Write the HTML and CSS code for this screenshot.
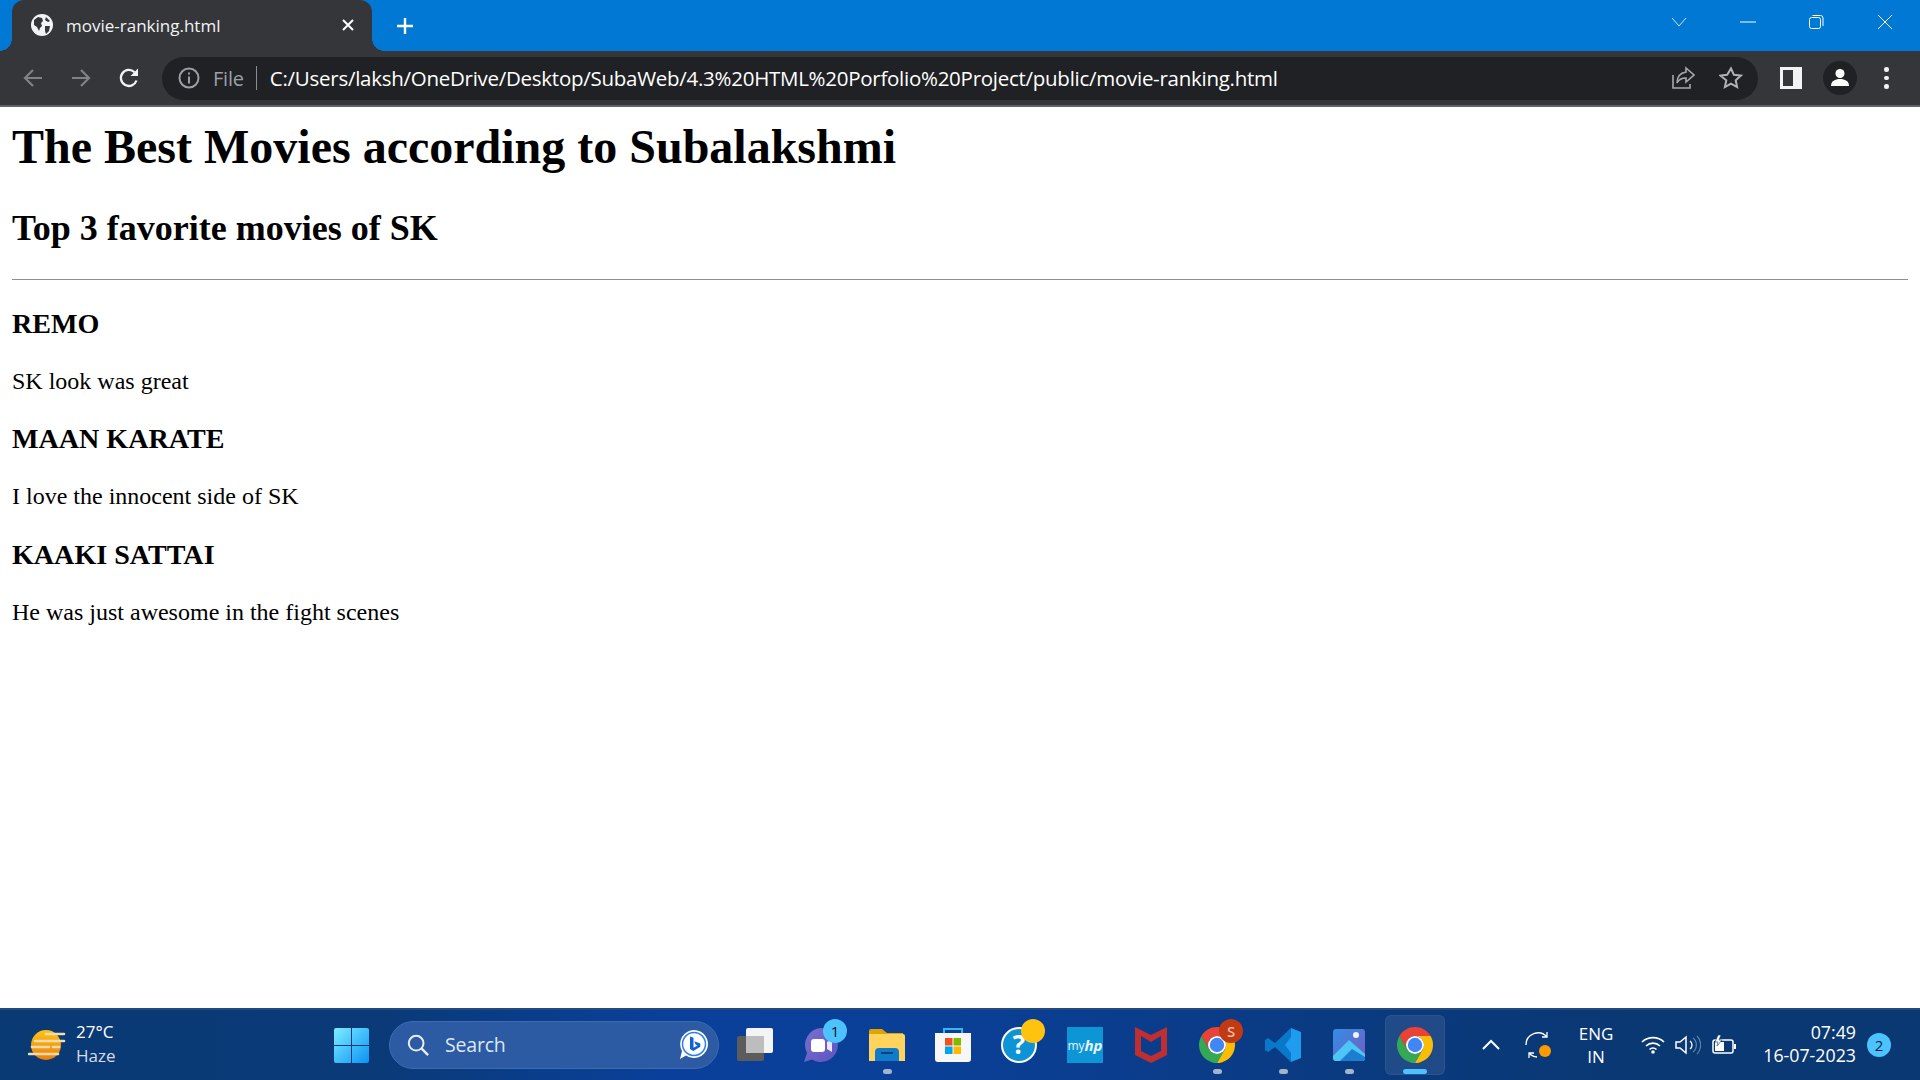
FILE: index.html
```html
<!DOCTYPE html>
<html lang="en">
<head>
<meta charset="utf-8">
<title>movie-ranking.html</title>
<link rel="stylesheet" href="styles.css">
</head>
<body>
<svg class="defs" width="0" height="0" aria-hidden="true">
  <symbol id="chrome" viewBox="4 4 40 40">
    <path fill="#ea4335" d="M24 14H41.32A20 20 0 0 0 6.68 14L15.34 29A10 10 0 0 1 24 14Z"/>
    <path fill="#34a853" d="M15.34 29L6.68 14A20 20 0 0 0 24 44L32.66 29A10 10 0 0 1 15.34 29Z"/>
    <path fill="#fbbc04" d="M32.66 29L24 44A20 20 0 0 0 41.32 14H24A10 10 0 0 1 32.66 29Z"/>
    <circle cx="24" cy="24" r="10" fill="#fff"/>
    <circle cx="24" cy="24" r="8" fill="#4285f4"/>
  </symbol>
</svg>

<header class="chrome">
  <div class="tabstrip">
    <div class="tab">
      <svg class="favicon" viewBox="0 0 22 22"><circle cx="11" cy="11" r="11" fill="#f1f3f4"/><path fill="#35363a" d="M3 6l4-3 4 1 1 3-2 2 1 3-2 2-1 3-2-4-3-2zM15 3l4 4-2 1-3-2zM14 12l5 0-1 5-3 3-1-3z"/></svg>
      <span class="tab-title">movie-ranking.html</span>
      <svg class="tab-close" viewBox="0 0 14 14"><path d="M2 2l10 10M12 2L2 12" stroke="#fff" stroke-width="2" fill="none"/></svg>
    </div>
    <svg class="newtab" viewBox="0 0 18 18"><path d="M9 1v16M1 9h16" stroke="#fff" stroke-width="2.4" fill="none"/></svg>
    <div class="wincontrols">
      <svg class="winbtn" viewBox="0 0 16 16"><path d="M1 4l7 8 7-8" stroke="#cfe4f7" fill="none"/></svg>
      <svg class="winbtn" viewBox="0 0 16 16"><path d="M0 8h16" stroke="#fff" fill="none"/></svg>
      <svg class="winbtn" viewBox="0 0 16 16"><rect x="1.500" y="3.500" width="11" height="11" rx="2" stroke="#fff" fill="none"/><path d="M4.500 1.500h8a2.500 2.500 0 0 1 2.500 2.500v8" stroke="#fff" fill="none"/></svg>
      <svg class="winbtn" viewBox="0 0 16 16"><path d="M1 1l14 14M15 1L1 15" stroke="#fff" fill="none"/></svg>
    </div>
  </div>
  <div class="toolbar">
    <svg class="tool" viewBox="0 0 24 24"><path d="M21 12H4M12 4l-8 8 8 8" stroke="#7f8286" stroke-width="2.200" fill="none"/></svg>
    <svg class="tool tool-fwd" viewBox="0 0 24 24"><path d="M3 12h17M12 4l8 8-8 8" stroke="#7f8286" stroke-width="2.200" fill="none"/></svg>
    <svg class="tool tool-reload" viewBox="0 0 24 24"><path d="M19.500 14.500A8 8 0 1 1 17.500 6.200" stroke="#f1f3f4" stroke-width="2.300" fill="none"/><path d="M21 2.500V10h-7.500z" fill="#f1f3f4"/></svg>
    <div class="omnibox">
      <svg class="info" viewBox="0 0 22 22"><circle cx="11" cy="11" r="9.500" stroke="#9aa0a6" stroke-width="2" fill="none"/><path d="M11 9.500v7M11 5.500v2" stroke="#9aa0a6" stroke-width="2"/></svg>
      <span class="file">File</span>
      <span class="sep"></span>
      <span class="url">C:/Users/laksh/OneDrive/Desktop/SubaWeb/4.3%20HTML%20Porfolio%20Project/public/movie-ranking.html</span>
      <svg class="omni-icon" viewBox="0 0 24 24"><path d="M2 9v13h17v-4" stroke="#a6a9ad" stroke-width="1.600" fill="none"/><path d="M15 2l8 7-8 7v-4c-4 0-7 1-9 5 0-6 3-10 9-11z" stroke="#a6a9ad" stroke-width="1.600" fill="none"/></svg>
      <svg class="omni-icon omni-star" viewBox="0 0 24 24"><path d="M12 2.500l2.900 6.300 6.900.8-5.100 4.700 1.400 6.800-6.100-3.400-6.100 3.400 1.400-6.800L1.300 9.600l6.900-.8z" stroke="#b0b2b5" stroke-width="2" fill="none"/></svg>
    </div>
    <svg class="panel" viewBox="0 0 22 22"><path fill-rule="evenodd" fill="#f1f3f4" d="M0 0h22v22H0zM3 3v16h10V3z"/></svg>
    <span class="avatar"><svg viewBox="0 0 20 20"><circle cx="10" cy="5.500" r="4.500" fill="#fff"/><path d="M1 18c0-5 4-7 9-7s9 2 9 7z" fill="#fff"/></svg></span>
    <span class="kebab"><i></i><i></i><i></i></span>
  </div>
  <div class="toolbar-line"></div>
</header>

<main class="page">
  <h1>The Best Movies according to Subalakshmi</h1>
  <h2>Top 3 favorite movies of SK</h2>
  <hr>
  <h3>REMO</h3>
  <p>SK look was great</p>
  <h3>MAAN KARATE</h3>
  <p>I love the innocent side of SK</p>
  <h3>KAAKI SATTAI</h3>
  <p>He was just awesome in the fight scenes</p>
</main>

<footer class="taskbar">
  <div class="weather">
    <svg class="weather-icon" viewBox="0 0 38 32"><defs><linearGradient id="sun" x1="0" y1="0" x2="0" y2="1"><stop offset="0" stop-color="#fcc419"/><stop offset="1" stop-color="#ee7d0b"/></linearGradient></defs><circle cx="18" cy="16" r="15" fill="url(#sun)"/><path d="M18 5h18M7 12h29M4 18h17M1 25h29M25 18h6" stroke="#f0dcae" stroke-width="2.600" stroke-linecap="round"/></svg>
    <div class="weather-text"><span class="temp">27°C</span><span class="cond">Haze</span></div>
  </div>
  <svg class="start" viewBox="0 0 35 35"><defs><linearGradient id="win" x1="0" y1="0" x2="1" y2="1"><stop offset="0" stop-color="#7deeff"/><stop offset="1" stop-color="#0a92f5"/></linearGradient></defs><path fill="url(#win)" d="M2 0h15v17H0V2a2 2 0 0 1 2-2zM18 0h15a2 2 0 0 1 2 2v15H18zM0 18h17v17H2a2 2 0 0 1-2-2zM18 18h17v15a2 2 0 0 1-2 2H18z"/></svg>
  <div class="search">
    <svg class="search-icon" viewBox="0 0 24 24"><circle cx="10" cy="10" r="8" stroke="#e8eef7" stroke-width="2.200" fill="none"/><path d="M16 16l7 7" stroke="#e8eef7" stroke-width="2.600"/></svg>
    <span class="search-text">Search</span>
    <svg class="bing" viewBox="0 0 30 30"><path fill="#fff" d="M15 0a14 14 0 1 1-8 25.500L1 29l2-8A14 14 0 0 1 15 0z"/><circle cx="15" cy="14" r="11.500" fill="none" stroke="#2a80e8" stroke-width="1.500"/><path fill="#0f62d6" d="M11 6.500l3.500 1.200v10l4-2.300-2-.9-1.200-3.200 6 2.100v3.400l-7 4.100-3.300-2z"/></svg>
  </div>
  <div class="apps">
    <div class="app"><svg class="appicon" viewBox="0 0 36 36"><rect x="0" y="9" width="27" height="25" rx="2" fill="#5c5c5c"/><rect x="9" y="1" width="27" height="25" rx="2" fill="#f4f4f4"/><rect x="9" y="9" width="18" height="17" fill="#bdbdbd"/></svg></div>
    <div class="app"><svg class="appicon" viewBox="0 0 36 36"><defs><linearGradient id="meet" x1="0" y1="0" x2="1" y2="1"><stop offset="0" stop-color="#7b6fd0"/><stop offset="1" stop-color="#5a55c0"/></linearGradient></defs><path fill="url(#meet)" d="M18 1a17 17 0 1 1-9 31.500L1 35l3-9A17 17 0 0 1 18 1z"/><rect x="8" y="12" width="14" height="13" rx="3" fill="#fff"/><path d="M24 15l5-3v13l-5-3z" fill="#e8e6f8"/></svg><span class="badge badge-blue">1</span></div>
    <div class="app"><svg class="appicon" viewBox="0 0 36 36"><path fill="#e0a400" d="M0 4a2 2 0 0 1 2-2h11l5 4h16v6H0z"/><path fill="#ffd35c" d="M0 7h34a2 2 0 0 1 2 2v25H0z"/><path fill="#0f7cc9" d="M6 34v-9a4 4 0 0 1 4-4h16a4 4 0 0 1 4 4v9z"/><path d="M12 26h12" stroke="#0a3f7a" stroke-width="2"/></svg><span class="dot"></span></div>
    <div class="app"><svg class="appicon" viewBox="0 0 36 36"><path d="M9 8V2h18v6" stroke="#35b7f3" stroke-width="2" fill="none"/><path fill="#f7f7f7" d="M0 6h36v26a3 3 0 0 1-3 3H3a3 3 0 0 1-3-3z"/><rect x="10" y="11" width="7.500" height="7.500" fill="#f25022"/><rect x="18.500" y="11" width="7.500" height="7.500" fill="#7fba00"/><rect x="10" y="19.500" width="7.500" height="7.500" fill="#00a4ef"/><rect x="18.500" y="19.500" width="7.500" height="7.500" fill="#ffb900"/></svg></div>
    <div class="app"><span class="help">?</span><span class="badge badge-yellow"></span></div>
    <div class="app"><span class="myhp"><span class="my">my</span><span class="hp">hp</span></span></div>
    <div class="app"><svg class="appicon" viewBox="0 0 36 36"><path fill="#bf2e30" fill-rule="evenodd" d="M2 0l16 8 16-8v28L18 36 2 28zM8 9v15l10 5 10-5V9l-10 6z"/></svg></div>
    <div class="app"><svg class="appicon"><use href="#chrome"/></svg><span class="badge badge-red">S</span><span class="dot"></span></div>
    <div class="app"><svg class="appicon" viewBox="0 0 36 36"><path fill="#0a78c8" d="M26 1l-16 15-7-5-3 2v10l3 2 7-5 16 15z"/><path fill="#1f9cf0" d="M26 1l10 4v26l-10 4zM26 10v16l-6-8z"/></svg><span class="dot"></span></div>
    <div class="app"><svg class="appicon" viewBox="0 0 36 36"><defs><linearGradient id="photo" x1="0" y1="0" x2="1" y2="1"><stop offset="0" stop-color="#2f8fe8"/><stop offset="1" stop-color="#7a5bc0"/></linearGradient></defs><rect x="2" y="2" width="32" height="32" rx="3" fill="url(#photo)"/><circle cx="25" cy="8" r="3" fill="#f0f4fa"/><path fill="#4cc6f5" d="M2 29l16-16 16 14v4a3 3 0 0 1-3 3H5a3 3 0 0 1-3-3z"/><path fill="#1b7ed0" d="M9 34l12-12 13 8v1a3 3 0 0 1-3 3z"/></svg><span class="dot"></span></div>
    <div class="app app-active"><svg class="appicon"><use href="#chrome"/></svg><span class="dot dot-active"></span></div>
  </div>
  <div class="tray">
    <svg class="caret" viewBox="0 0 18 12"><path d="M1 10l8-8 8 8" stroke="#fff" stroke-width="2" fill="none"/></svg>
    <svg class="sync" viewBox="0 0 26 26"><path d="M1 13A12 12 0 0 1 22 5M22 0v5h-5M4 21A12 12 0 0 0 12 25M4 26v-5h5" stroke="#fff" stroke-width="1.300" fill="none"/><circle cx="20" cy="19" r="6" fill="#f90"/></svg>
    <div class="lang"><span>ENG</span><span>IN</span></div>
    <svg class="wifi" viewBox="0 0 24 18"><path d="M1 6a16 16 0 0 1 22 0M5 10a10 10 0 0 1 14 0M8.500 13.500a5 5 0 0 1 7 0" stroke="#fff" stroke-width="1.600" fill="none"/><circle cx="12" cy="16" r="1.800" fill="#fff"/></svg>
    <svg class="volume" viewBox="0 0 26 20"><path d="M1 7h4l6-5v16l-6-5H1z" stroke="#fff" stroke-width="1.500" fill="none"/><path d="M15 6a5 5 0 0 1 0 8" stroke="#fff" stroke-width="1.300" fill="none"/><path d="M18 3a9 9 0 0 1 0 14M22 1a13 13 0 0 1 0 18" stroke="#5f80ab" stroke-width="1.200" fill="none"/></svg>
    <svg class="battery" viewBox="0 0 26 20"><rect x="1" y="5" width="20" height="13" rx="2" stroke="#fff" stroke-width="1.500" fill="none"/><path d="M23 9v5" stroke="#fff" stroke-width="2"/><path d="M3 7h9v9H3z" fill="#fff"/><path d="M6 0L3 7h3l-1 4 5-6H7l2-5z" fill="#fff" stroke="#0a3a78" stroke-width=".6"/></svg>
    <div class="clock"><span>07:49</span><span>16-07-2023</span></div>
    <span class="notif">2</span>
  </div>
</footer>
</body>
</html>
```

FILE: styles.css
```css
* { box-sizing: border-box; }
html, body { height: 100%; }
body {
  margin: 0;
  height: 1080px;
  overflow: hidden;
  display: flex;
  flex-direction: column;
  background: #fff;
}
.defs { position: absolute; }

/* browser chrome */
.chrome { flex: none; font-family: "Open Sans", "Noto Sans", sans-serif; }
.tabstrip {
  height: 51px;
  background: #0178d4;
  display: flex;
  align-items: flex-end;
  padding-left: 12px;
}
.tab {
  position: relative;
  width: 360px;
  height: 51px;
  background: #35363a;
  border-radius: 12px 12px 0 0;
  display: flex;
  align-items: center;
  padding: 0 17px 1px 20px;
  color: #f1f3f4;
}
.tab::before, .tab::after {
  content: "";
  position: absolute;
  bottom: 0;
  width: 12px;
  height: 12px;
}
.tab::before { left: -12px; background: radial-gradient(circle at 0 0, #0178d4 11.500px, #35363a 12px); }
.tab::after { right: -12px; background: radial-gradient(circle at 100% 0, #0178d4 11.500px, #35363a 12px); }
.favicon { width: 22px; height: 22px; flex: none; margin-left: -1px; }
.tab-title { margin-left: 13px; font-size: 17px; letter-spacing: 0; flex: 1; white-space: nowrap; }
.tab-close { width: 14px; height: 14px; flex: none; }
.newtab { width: 18px; height: 18px; margin: 0 0 16px 24px; flex: none; }
.wincontrols {
  margin-left: auto;
  align-self: stretch;
  display: flex;
  align-items: flex-start;
  padding: 14px 27px 0 0;
  gap: 52.700px;
}
.winbtn { width: 16px; height: 16px; display: block; }

.toolbar {
  height: 54px;
  background: #35363a;
  display: flex;
  align-items: center;
  padding-left: 21px;
}
.tool { width: 24px; height: 24px; flex: none; }
.tool-fwd { margin-left: 24px; }
.tool-reload { margin-left: 24px; }
.omnibox {
  width: 1596px;
  height: 43px;
  margin-left: 21px;
  background: #202124;
  border-radius: 22px;
  display: flex;
  align-items: center;
  padding: 0 15px;
  flex: none;
}
.info { width: 22px; height: 22px; flex: none; margin-left: 1px; }
.file { margin-left: 13px; color: #9aa0a6; font-size: 20px; letter-spacing: -0.2px; }
.sep { width: 1px; height: 24px; background: #8a8d91; margin-left: 12px; flex: none; }
.url {
  margin-left: 13px;
  flex: 1;
  color: #fff;
  font-size: 20.500px;
  white-space: nowrap;
  letter-spacing: -0.27px;
}
.omni-icon { width: 24px; height: 24px; flex: none; }
.omni-star { margin-left: 24px; }
.panel { width: 22px; height: 22px; margin-left: 22px; flex: none; }
.avatar {
  width: 34px;
  height: 34px;
  margin-left: 21px;
  border-radius: 50%;
  background: #202124;
  display: flex;
  align-items: center;
  justify-content: center;
  flex: none;
}
.avatar svg { width: 20px; height: 20px; }
.kebab { margin-left: 27px; display: flex; flex-direction: column; gap: 4px; flex: none; }
.kebab i { width: 4.500px; height: 4.500px; border-radius: 50%; background: #f1f3f4; display: block; }
.toolbar-line { height: 2px; background: #5f6368; }

/* page content */
.page {
  flex: 1;
  min-height: 0;
  padding: 0 12px;
  color: #000;
  font-family: "Liberation Serif", "Times New Roman", serif;
  font-size: 24px;
}
h1 { font-size: 48px; margin: 12.400px 0 32.160px; }
h2 { font-size: 36px; margin: 30px 0; }
h3 { font-size: 28.080px; margin: 28.080px 0; }
p { margin: 24px 0; line-height: 27.500px; }
hr { margin: 12px 0 12.500px; border: 0; border-top: 1.500px solid #8f8f8f; height: 0; }

/* taskbar */
.taskbar {
  flex: none;
  height: 72px;
  display: flex;
  align-items: center;
  color: #fff;
  font-family: "Open Sans", "Noto Sans", sans-serif;
  background: linear-gradient(90deg, #0a3a74 0, #0a3a78 20%, #0a409b 35%, #0a3f96 50%, #0a3a80 70%, #0a3873 85%, #0a3873 100%);
  border-top: 2px solid #234a7f;
}
.weather { width: 334px; padding-left: 28px; display: flex; align-items: center; gap: 10px; flex: none; }
.weather-icon { width: 38px; height: 32px; }
.weather-text { display: flex; flex-direction: column; line-height: 24px; font-size: 17px; padding-bottom: 2px; }
.cond { color: #d4dce8; }
.start { width: 35px; height: 35px; flex: none; }
.search {
  width: 330px;
  height: 48px;
  margin-left: 20px;
  border-radius: 24px;
  background: #2c5ba4;
  border: 1px solid #3f6cb0;
  display: flex;
  align-items: center;
  padding: 0 9px 0 17px;
  flex: none;
}
.search-icon { width: 22px; height: 22px; flex: none; }
.search-text { margin-left: 16px; font-size: 19.500px; color: #dfe7f3; flex: 1; letter-spacing: -0.2px; padding-bottom: 2px; }
.bing { width: 30px; height: 30px; flex: none; }
.apps { margin-left: 3px; display: flex; flex: none; }
.app {
  position: relative;
  width: 66px;
  height: 60px;
  display: flex;
  align-items: center;
  justify-content: center;
  border: 1px solid transparent;
  border-radius: 6px;
}
.app-active {
  width: 60px;
  margin: 0 3px;
  background: rgba(255, 255, 255, .09);
  border-color: rgba(255, 255, 255, .06);
}
.appicon { width: 36px; height: 36px; display: block; }
.dot {
  position: absolute;
  bottom: 0;
  left: 50%;
  width: 9px;
  height: 5px;
  margin-left: -4.500px;
  border-radius: 3px;
  background: #a4b4cc;
}
.dot-active { width: 24px; margin-left: -12px; background: #4cc2ff; }
.badge {
  position: absolute;
  top: 3px;
  left: 34px;
  width: 24px;
  height: 24px;
  border-radius: 50%;
  font-size: 15px;
  line-height: 24px;
  text-align: center;
  color: #111;
}
.badge-blue { background: #4cc2ff; }
.badge-yellow { background: #ffc20e; }
.badge-red { background: #c13a12; color: #f0b8a8; font-weight: 600; }
.help {
  width: 36px;
  height: 36px;
  border-radius: 50%;
  background: #0e94d4;
  border: 2px solid #fff;
  color: #fff;
  font-size: 26px;
  font-weight: 700;
  line-height: 30px;
  text-align: center;
}
.myhp {
  width: 36px;
  height: 36px;
  background: #0d96d6;
  display: flex;
  align-items: center;
  justify-content: center;
  font-size: 12px;
  color: #e6f4fb;
  white-space: nowrap;
}
.hp { font-weight: 700; font-style: italic; font-size: 15px; }
.tray { display: flex; align-items: center; flex: none; }
.caret { width: 18px; height: 12px; margin-left: 34px; flex: none; }
.sync { width: 26px; height: 26px; margin-left: 25px; flex: none; }
.lang, .clock { display: flex; flex-direction: column; font-size: 17px; line-height: 23px; flex: none; }
.lang { width: 50px; margin-left: 20px; text-align: center; }
.wifi { width: 24px; height: 18px; margin-left: 20px; flex: none; }
.volume { width: 26px; height: 20px; margin-left: 10px; flex: none; }
.battery { width: 26px; height: 20px; margin-left: 11px; flex: none; }
.clock { width: 110px; margin-left: 8px; text-align: right; font-size: 17.800px; letter-spacing: 0; padding-bottom: 2px; }
.notif {
  width: 24px;
  height: 24px;
  margin-left: 11px;
  border-radius: 50%;
  background: #4cc2ff;
  color: #0a2240;
  font-size: 15px;
  line-height: 24px;
  text-align: center;
  flex: none;
}
```
